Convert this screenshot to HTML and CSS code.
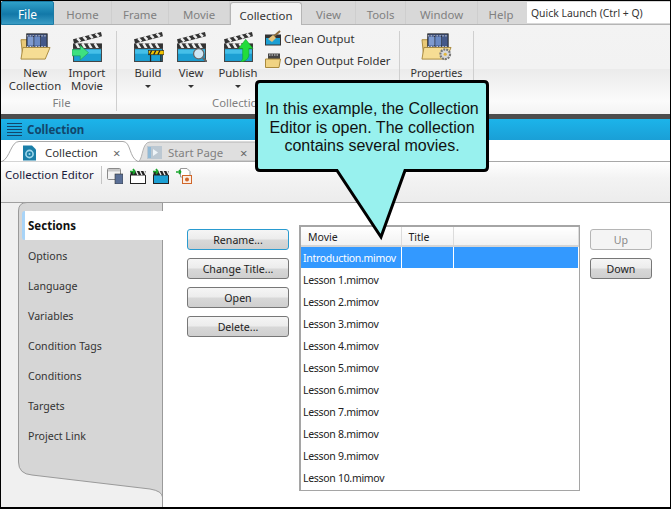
FILE: index.html
```html
<!DOCTYPE html>
<html lang="en">
<head>
    <meta charset="UTF-8">
    <meta name="viewport" content="width=device-width, initial-scale=1.0">
    <title>Collection Editor</title>
    <link rel="stylesheet" href="styles.css">
</head>
<body>
    <!-- shared icon parts -->
    <svg class="defs" width="0" height="0">
        <symbol id="clapper" viewBox="0 0 30 30">
            <path d="M1 8 L28 1 L29 5 L2 12 Z" fill="#333"/>
            <path d="M5 7 L8 10 M11 5.5 L14 8.5 M17 4 L20 7 M23 2.5 L26 5.5" stroke="#eee" stroke-width="2.4"/>
            <rect x="1" y="12" width="28" height="5" fill="#333"/>
            <path d="M4 12 L7 17 M10 12 L13 17 M16 12 L19 17 M22 12 L25 17" stroke="#eee" stroke-width="2.4"/>
            <rect x="1.5" y="17" width="27" height="12.5" fill="#1c9fd3" stroke="#444"/>
            <rect x="2" y="18" width="26" height="4" fill="#45bfe8"/>
        </symbol>
        <symbol id="folder" viewBox="0 0 32 30">
            <path d="M1 8 H8 L10 10 H24 V27 H3 Z" fill="#e9c978" stroke="#a98a3e"/>
            <rect x="7" y="2" width="21" height="15" fill="#44598a" stroke="#222"/>
            <path d="M7 4 H28 M7 15 H28" stroke="#ddd" stroke-dasharray="1.5 1.5"/>
            <path d="M14 4 V15 M21 4 V15" stroke="#222"/>
            <rect x="8" y="5" width="6" height="9" fill="#7f9bcf"/>
            <rect x="15" y="5" width="6" height="9" fill="#6a8ac4"/>
            <path d="M3 16 H31 L26 28 H1 Z" fill="#f6dd94" stroke="#a98a3e"/>
        </symbol>
        <symbol id="mini-clapper" viewBox="0 0 16 16">
            <rect x="0.5" y="7" width="15" height="8.5" fill="currentColor" stroke="#222"/>
            <rect x="0.5" y="3" width="15" height="4" fill="#222"/>
            <path d="M6 3 L8 7 M10 3 L12 7 M14 3 L16 7" stroke="#eee" stroke-width="1.4"/>
            <path d="M0 3.5 H5 M5 3.5 L3 1 M5 3.5 L3 6" stroke="#19a52c" stroke-width="1.7" fill="none"/>
        </symbol>
    </svg>

    <div class="page">
        <nav class="menu-tabs">
            <a class="file-tab">File</a>
            <a class="menu-tab w-home">Home</a>
            <a class="menu-tab w-frame">Frame</a>
            <a class="menu-tab w-movie">Movie</a>
            <a class="menu-tab w-collection active">Collection</a>
            <a class="menu-tab w-view">View</a>
            <a class="menu-tab w-tools">Tools</a>
            <a class="menu-tab w-window">Window</a>
            <a class="menu-tab w-help">Help</a>
            <input class="quick-launch" type="text" value="Quick Launch (Ctrl + Q)">
        </nav>

        <section class="ribbon">
            <div class="group group-file">
                <div class="group-items">
                    <div class="big-btn w56">
                        <svg class="big-icon" viewBox="0 0 32 30"><use href="#folder"/></svg>
                        <span>New<br>Collection</span>
                    </div>
                    <div class="big-btn w44">
                        <svg class="big-icon" viewBox="0 0 30 30">
                            <use href="#clapper"/>
                            <path d="M0 18 H8 V14 L16 21 L8 28 V24 H0 Z" fill="#3ee07f" stroke="#1d9d52" stroke-width="0.6"/>
                        </svg>
                        <span>Import<br>Movie</span>
                    </div>
                </div>
                <div class="group-label">File</div>
            </div>

            <div class="group group-collection">
                <div class="group-items">
                    <div class="big-btn w36">
                        <svg class="big-icon" viewBox="0 0 30 30">
                            <use href="#clapper"/>
                            <rect x="15" y="19" width="15" height="4" fill="#f2c200" stroke="#222" stroke-width="0.6"/>
                            <path d="M17 23 V30 M27 23 V30" stroke="#222" stroke-width="1.2"/>
                            <path d="M18 19 L16 23 M22 19 L20 23 M26 19 L24 23" stroke="#222" stroke-width="1.2"/>
                        </svg>
                        <span>Build</span>
                        <i class="caret"></i>
                    </div>
                    <div class="big-btn w36">
                        <svg class="big-icon" viewBox="0 0 30 30">
                            <use href="#clapper"/>
                            <circle cx="22" cy="22" r="5" fill="#cfe6f4" stroke="#666" stroke-width="1.2"/>
                            <path d="M26 26 L30 30" stroke="#666" stroke-width="2"/>
                        </svg>
                        <span>View</span>
                        <i class="caret"></i>
                    </div>
                    <div class="big-btn w44">
                        <svg class="big-icon" viewBox="0 0 30 30">
                            <use href="#clapper"/>
                            <path d="M22 8 L29 17 H25 V24 Q24 29 17 30 Q20 27 19 24 V17 H15 Z" fill="#22dc3c" stroke="#109a25" stroke-width="0.5"/>
                        </svg>
                        <span>Publish</span>
                        <i class="caret"></i>
                    </div>
                    <div class="small-btns">
                        <div class="small-btn">
                            <svg class="small-icon" viewBox="0 0 16 16">
                                <rect x="0.5" y="5" width="15" height="10" fill="#1c9fd3" stroke="#333"/>
                                <rect x="0.5" y="5" width="15" height="3" fill="#333"/>
                                <path d="M15 1 L7 8" stroke="#8a6a3a" stroke-width="2"/>
                                <path d="M8 5 L11 8 L7 12 L3 9 Z" fill="#e5c27a"/>
                            </svg>
                            Clean Output
                        </div>
                        <div class="small-btn">
                            <svg class="small-icon" viewBox="0 0 16 16">
                                <rect x="3" y="1.5" width="12" height="6" fill="#444"/>
                                <path d="M4 3 H14" stroke="#ddd" stroke-dasharray="1.5 1"/>
                                <path d="M0.5 7 H15.5 L14 15.5 H0.5 Z" fill="#f0d383" stroke="#a98a3e"/>
                            </svg>
                            Open Output Folder
                        </div>
                    </div>
                </div>
                <div class="group-label label-collection">Collection</div>
            </div>

            <div class="group group-props">
                <div class="group-items">
                    <div class="big-btn w-props">
                        <svg class="big-icon" viewBox="0 0 32 30">
                            <use href="#folder"/>
                            <circle cx="25" cy="23" r="5" fill="#d8d8d8" stroke="#777" stroke-width="2.2" stroke-dasharray="2 1"/>
                            <circle cx="25" cy="23" r="1.6" fill="#e3b63c"/>
                        </svg>
                        <span>Properties</span>
                    </div>
                </div>
            </div>
        </section>

        <div class="dark-band"></div>

        <header class="title-bar">
            <span class="hamburger"></span>
            <span>Collection</span>
        </header>

        <div class="doc-tabs">
            <svg class="doc-tabs-bg" width="260" height="22" viewBox="0 0 260 22">
                <path d="M138 21 C142 18 141 2 149 2 H256 V21 Z" fill="#dfdfdf" stroke="#b4b4b4"/>
                <path d="M1 21.5 C9 18 10 1.5 18 1.5 H122 C130 1.5 128 18 137 21.5" fill="#fff" stroke="#a8a8a8"/>
            </svg>
            <div class="doc-tab doc-tab-active">
                <svg class="doc-icon" viewBox="0 0 13 15">
                    <path d="M0 0 H9 L13 4 V15 H0 Z" fill="#1b7fa8"/>
                    <circle cx="6.5" cy="8.5" r="3.6" fill="none" stroke="#9fd8ec" stroke-width="1.6"/>
                    <circle cx="6.5" cy="8.5" r="1" fill="#9fd8ec"/>
                </svg>
                <span class="doc-name">Collection</span>
                <span class="doc-close">×</span>
            </div>
            <div class="doc-tab doc-tab-other">
                <svg class="doc-icon" viewBox="0 0 15 13">
                    <rect x="0" y="0" width="15" height="13" fill="#bcc8d2"/>
                    <rect x="1" y="1" width="3" height="11" fill="#8fb9d6"/>
                    <path d="M6 3 L11 6.5 L6 10 Z" fill="#eef4f8"/>
                </svg>
                <span class="doc-name">Start Page</span>
                <span class="doc-close">×</span>
            </div>
        </div>

        <div class="editor-bar">
            <span class="editor-name">Collection Editor</span>
            <span class="editor-sep"></span>
            <svg class="tool-icon" viewBox="0 0 16 16">
                <rect x="0.5" y="0.5" width="13" height="11" rx="1" fill="#f3f3f3" stroke="#8a8a8a"/>
                <rect x="1" y="1" width="12" height="2.5" fill="#c8c8c8"/>
                <rect x="8" y="6" width="8" height="10" fill="#5a6f96" stroke="#333" stroke-width="0.6"/>
            </svg>
            <svg class="tool-icon tone-white" viewBox="0 0 16 16"><use href="#mini-clapper"/></svg>
            <svg class="tool-icon tone-blue" viewBox="0 0 16 16"><use href="#mini-clapper"/></svg>
            <svg class="tool-icon" viewBox="0 0 16 16">
                <path d="M4.5 0.5 H11 L14 3.5 V9 H4.5 Z" fill="#fff" stroke="#999"/>
                <path d="M0 4 H5 M5 4 L3 2 M5 4 L3 6" stroke="#19a52c" stroke-width="1.6" fill="none"/>
                <rect x="6.5" y="7.5" width="9" height="8" fill="#fbeee4" stroke="#d0662a"/>
                <circle cx="11" cy="11.5" r="2" fill="#d0662a"/>
            </svg>
        </div>

        <main class="main">
            <aside class="sidebar">
                <svg class="sidebar-shape" width="146" height="305" viewBox="0 0 146 305">
                    <path d="M0.5 260 V9 Q0.5 0.5 9 0.5 H144.5 V295 Q144 289 132 287 L14 273 Q0.5 272 0.5 260 Z" fill="#d6d6d6" stroke="#9a9a9a"/>
                    <path d="M144.5 295 V305" stroke="#9a9a9a"/>
                </svg>
                <ul class="sections">
                    <li class="section active">Sections</li>
                    <li class="section">Options</li>
                    <li class="section">Language</li>
                    <li class="section">Variables</li>
                    <li class="section">Condition Tags</li>
                    <li class="section">Conditions</li>
                    <li class="section">Targets</li>
                    <li class="section">Project Link</li>
                </ul>
            </aside>

            <div class="panel">
                <div class="action-btns">
                    <button class="btn btn-focus">Rename...</button>
                    <button class="btn">Change Title...</button>
                    <button class="btn">Open</button>
                    <button class="btn">Delete...</button>
                </div>

                <div class="movie-list">
                    <table class="movies">
                        <thead>
                            <tr><th class="col-movie">Movie</th><th class="col-title">Title</th><th></th></tr>
                        </thead>
                        <tbody>
                            <tr class="selected"><td>Introduction.mimov</td><td></td><td></td></tr>
                            <tr><td>Lesson 1.mimov</td><td></td><td></td></tr>
                            <tr><td>Lesson 2.mimov</td><td></td><td></td></tr>
                            <tr><td>Lesson 3.mimov</td><td></td><td></td></tr>
                            <tr><td>Lesson 4.mimov</td><td></td><td></td></tr>
                            <tr><td>Lesson 5.mimov</td><td></td><td></td></tr>
                            <tr><td>Lesson 6.mimov</td><td></td><td></td></tr>
                            <tr><td>Lesson 7.mimov</td><td></td><td></td></tr>
                            <tr><td>Lesson 8.mimov</td><td></td><td></td></tr>
                            <tr><td>Lesson 9.mimov</td><td></td><td></td></tr>
                            <tr><td>Lesson 10.mimov</td><td></td><td></td></tr>
                        </tbody>
                    </table>
                </div>

                <div class="order-btns">
                    <button class="btn btn-small btn-disabled">Up</button>
                    <button class="btn btn-small">Down</button>
                </div>
            </div>
        </main>

        <div class="callout">
            <svg class="callout-shape" width="236" height="162" viewBox="0 0 236 162">
                <path d="M5 1.5 H229 Q232.5 1.5 232.5 5 V87 Q232.5 90.5 229 90.5 H150 L126 157 L82 90.5 H5 Q1.5 90.5 1.5 87 V5 Q1.5 1.5 5 1.5 Z" fill="#98f1ee" stroke="#000" stroke-width="3"/>
            </svg>
            <p class="callout-text">In this example, the Collection<br>Editor is open. The collection<br>contains several movies.</p>
        </div>
    </div>
</body>
</html>
```

FILE: styles.css
```css
* {
    box-sizing: border-box;
}
body {
    margin: 0;
    font-family: "Noto Sans", Arial, sans-serif;
    font-size: 11.3px;
    color: #222;
}
.defs {
    position: absolute;
}
.page {
    position: relative;
    width: 671px;
    height: 509px;
    display: flex;
    flex-direction: column;
    overflow: hidden;
    background: #f0f0f0;
    border: 1px solid #000;
    border-bottom-width: 2px;
}

/* top menu */
.menu-tabs {
    display: flex;
    height: 24px;
    flex: none;
    background: #d8d8d8;
    border-bottom: 1px solid #b5b5b5;
}
.file-tab {
    width: 53px;
    margin-bottom: -1px;
    text-align: center;
    line-height: 26px;
    font-size: 12px;
    color: #fff;
    background: linear-gradient(#2fa0c8, #1278a8 55%, #3a9cc4);
    border: 1px solid #1c7ba5;
    border-radius: 2px 2px 0 0;
}
.menu-tab {
    text-align: center;
    line-height: 27px;
    font-size: 11.4px;
    color: #808080;
    border-right: 1px solid #cecece;
}
.menu-tab.active {
    height: 25px;
    margin-top: 1px;
    line-height: 26px;
    color: #333;
    background: #f3f3f3;
    border: 1px solid #b5b5b5;
    border-bottom: none;
    border-radius: 3px 3px 0 0;
}
.w-home { width: 58px; }
.w-frame { width: 57px; }
.w-movie { width: 61px; }
.w-collection { width: 72px; }
.w-view { width: 54px; }
.w-tools { width: 50px; }
.w-window { width: 72px; }
.w-help { width: 46px; border-right: none; }
.quick-launch {
    width: 143px;
    height: 21px;
    margin: 1px 0 0 3px;
    padding: 0 4px;
    border: none;
    font-family: inherit;
    font-size: 10.4px;
    color: #333;
    background: #fff;
}

/* ribbon */
.ribbon {
    display: flex;
    height: 89px;
    flex: none;
    background: linear-gradient(#f3f3f3 0, #f2f2f2 44px, #ebebeb 44px, #fbfbfb 76px, #f3f3f3 89px);
}
.group {
    display: flex;
    flex-direction: column;
    height: 80px;
    margin-top: 6px;
    border-right: 1px solid #cfcfcf;
}
.group-items {
    display: flex;
    flex: 1;
}
.group-file {
    width: 116px;
    padding-left: 6px;
}
.group-collection {
    width: 283px;
    padding-left: 13px;
}
.group-props {
    width: 74px;
}
.group-label {
    text-align: center;
    color: #808080;
    line-height: 16px;
}
.group-label.label-collection {
    margin-left: 82px;
    text-align: left;
}
.big-btn {
    display: flex;
    flex-direction: column;
    align-items: center;
    text-align: center;
    line-height: 13px;
    color: #333;
}
.big-btn span {
    margin-top: 4px;
}
.w56 { width: 56px; margin-right: 2px; }
.w44 { width: 44px; }
.w36 { width: 36px; margin-right: 7px; }
.w-props { width: 75px; font-size: 10.7px; }
.w-props span { margin-top: 5px; }
.big-icon {
    width: 31px;
    height: 31px;
    flex: none;
}
.caret {
    width: 0;
    height: 0;
    margin-top: 6px;
    border: 3px solid transparent;
    border-top-color: #333;
    border-bottom: none;
}
.small-btns {
    margin: -2px 0 0 5px;
    display: flex;
    flex-direction: column;
    gap: 4px;
}
.small-btn {
    display: flex;
    align-items: center;
    gap: 3px;
    height: 18px;
    color: #333;
}
.small-icon {
    width: 16px;
    height: 16px;
}
.dark-band {
    height: 5px;
    flex: none;
    background: #4d4d4d;
}

/* collection window */
.title-bar {
    display: flex;
    align-items: center;
    gap: 5px;
    height: 21px;
    flex: none;
    padding-left: 6px;
    font-weight: bold;
    font-size: 11.5px;
    color: #12466b;
    background: linear-gradient(#1cb4ea, #1a9fd6);
}
.hamburger {
    width: 15px;
    height: 13px;
    background: repeating-linear-gradient(#12466b 0, #12466b 1px, transparent 1px, transparent 3px);
}
.doc-tabs {
    position: relative;
    display: flex;
    height: 22px;
    flex: none;
    background: #fff;
    border-bottom: 1px solid #a8a8a8;
}
.doc-tabs-bg {
    position: absolute;
    left: 0;
    top: 0;
}
.doc-tab {
    position: relative;
    display: flex;
    align-items: center;
    padding-top: 4px;
}
.doc-tab-active {
    width: 137px;
    padding-left: 22px;
    color: #333;
}
.doc-tab-other {
    width: 118px;
    padding-left: 9px;
    color: #808080;
}
.doc-icon {
    width: 13px;
    height: 16px;
    flex: none;
}
.doc-tab-other .doc-icon {
    width: 15px;
    height: 13px;
}
.doc-name {
    margin-left: 9px;
    width: 64px;
    font-size: 11.4px;
}
.doc-tab-other .doc-name {
    margin-left: 6px;
    width: 68px;
}
.doc-close {
    margin-left: 4px;
    font-size: 13px;
    color: #666;
}
.editor-bar {
    display: flex;
    align-items: flex-start;
    height: 41px;
    flex: none;
    padding: 3px 0 0 4px;
    background: linear-gradient(#fff, #f3f3f3 40%, #ececec);
    border-bottom: 1px solid #a0a0a0;
}
.editor-name {
    line-height: 19px;
    color: #1a1a3a;
    font-size: 11.5px;
}
.editor-sep {
    width: 1px;
    height: 18px;
    margin: 1px 5px 0 7px;
    background: #c4c4c4;
}
.tool-icon {
    width: 16px;
    height: 16px;
    margin: 3px 7px 0 0;
}
.tone-white { color: #fff; }
.tone-blue { color: #1c9fd3; }

/* sections + list */
.main {
    display: flex;
    flex: 1;
    min-height: 0;
}
.sidebar {
    position: relative;
    width: 162px;
    flex: none;
    padding-left: 17px;
}
.sidebar-shape {
    position: absolute;
    left: 17px;
    top: -1px;
}
.sections {
    position: relative;
    margin: 8px 0 0;
    padding: 0;
    list-style: none;
}
.section {
    height: 30px;
    padding-left: 10px;
    line-height: 30px;
    font-size: 10.6px;
    color: #333;
}
.section.active {
    height: 29px;
    margin: 0 -1px 1px 4px;
    padding-left: 3px;
    font-size: 11.5px;
    font-weight: bold;
    color: #111;
    background: #fff;
    border-left: 3px solid #a8d4f8;
    border-radius: 3px 0 0 3px;
}
.panel {
    display: flex;
    flex: 1;
    align-items: flex-start;
    background: #fff;
}
.action-btns {
    display: flex;
    flex-direction: column;
    gap: 8px;
    width: 102px;
    margin: 26px 0 0 24px;
}
.btn {
    height: 21px;
    padding: 0;
    font-family: inherit;
    font-size: 10.6px;
    color: #222;
    background: linear-gradient(#f5f5f5, #ececec 48%, #d8d8d8 52%, #cfcfcf);
    border: 1px solid #777;
    border-radius: 3px;
}
.btn-focus {
    border-color: #2a9bd0;
}
.btn-small {
    width: 62px;
}
.btn-disabled {
    color: #8a8a8a;
    background: #f4f4f4;
    border-color: #b5b5b5;
}
.movie-list {
    width: 281px;
    height: 266px;
    margin: 22px 0 0 10px;
    border: 2px solid #a5a5a5;
    border-right-width: 1px;
    border-bottom-width: 1px;
}
.movies {
    width: 100%;
    table-layout: fixed;
    border-collapse: collapse;
    font-size: 10.5px;
}
.movies th {
    height: 19px;
    padding: 1px 0 0;
    text-align: left;
    font-weight: normal;
    color: #222;
    background: linear-gradient(#fff, #f2f2f2);
    border-right: 1px solid #dcdcdc;
    border-bottom: 2px solid #d5d5d5;
}
.movies th.col-movie {
    width: 100px;
    padding-left: 7px;
}
.movies th.col-title {
    width: 52px;
    padding-left: 7px;
}
.movies td {
    height: 22px;
    padding: 1px 0 0 2px;
    letter-spacing: -0.3px;
    white-space: nowrap;
    color: #222;
}
.selected td {
    color: #fff;
    background: #3399ff;
    border-right: 1px solid #fff;
}
.order-btns {
    display: flex;
    flex-direction: column;
    gap: 8px;
    margin: 26px 0 0 10px;
}

/* note on top of the app */
.callout {
    position: absolute;
    left: 254px;
    top: 79px;
    width: 236px;
    height: 162px;
}
.callout-shape {
    position: absolute;
    left: 0;
    top: 0;
}
.callout-text {
    position: relative;
    margin: 0;
    padding-top: 20px;
    width: 234px;
    text-align: center;
    font-family: "Liberation Sans", Arial, sans-serif;
    font-size: 16px;
    line-height: 18.5px;
    color: #111;
}
```
